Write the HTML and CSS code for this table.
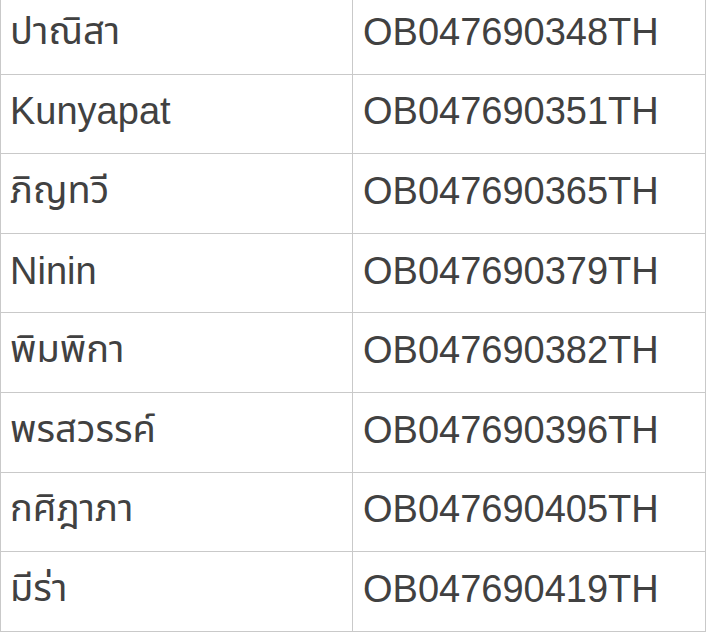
FILE: index.html
```html
<!DOCTYPE html>
<html lang="th">
<head>
<meta charset="utf-8">
<title>รายการพัสดุ</title>
<link rel="stylesheet" href="styles.css">
</head>
<body>
<table class="list">
  <tbody>
    <tr><td class="name">ปาณิสา</td><td class="code">OB047690348TH</td></tr>
    <tr><td class="name">Kunyapat</td><td class="code">OB047690351TH</td></tr>
    <tr><td class="name">ภิญทวี</td><td class="code">OB047690365TH</td></tr>
    <tr><td class="name">Ninin</td><td class="code">OB047690379TH</td></tr>
    <tr><td class="name">พิมพิกา</td><td class="code">OB047690382TH</td></tr>
    <tr><td class="name">พรสวรรค์</td><td class="code">OB047690396TH</td></tr>
    <tr><td class="name">กศิฎาภา</td><td class="code">OB047690405TH</td></tr>
    <tr><td class="name">มีร่า</td><td class="code">OB047690419TH</td></tr>
  </tbody>
</table>
</body>
</html>
```

FILE: styles.css
```css
html, body {
  margin: 0;
  padding: 0;
  background: #ffffff;
  overflow: hidden;
}

.list {
  width: 706px;
  margin-top: -6px;
  border-collapse: collapse;
  table-layout: fixed;
  font-family: "Liberation Sans", "Noto Sans Thai", "Noto Sans", "DejaVu Sans", sans-serif;
  font-size: 38px;
  color: #414141;
}

.list tr {
  height: 79.6px;
}

.list td {
  border: 1px solid #c9c9c9;
  padding: 0 0 4px 9px;
  vertical-align: middle;
  white-space: nowrap;
}

.list td.name {
  width: 342px;
}

.list td.code {
  padding-left: 10px;
}
```
